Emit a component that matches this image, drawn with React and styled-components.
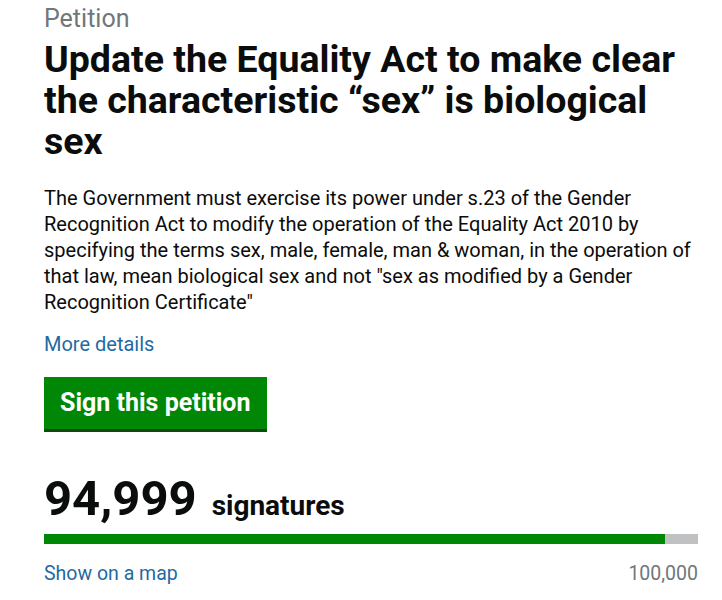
import styled, { createGlobalStyle } from "styled-components";

const GlobalStyle = createGlobalStyle`
  body {
    margin: 0;
    background: #ffffff;
    font-family: Roboto, "Noto Sans", Arial, sans-serif;
    color: #0b0c0c;
  }
`;

const petition = {
  title: "Update the Equality Act to make clear the characteristic \u201csex\u201d is biological sex",
  summary:
    'The Government must exercise its power under s.23 of the Gender Recognition Act to modify the operation of the Equality Act 2010 by specifying the terms sex, male, female, man & woman, in the operation of that law, mean biological sex and not "sex as modified by a Gender Recognition Certificate"',
  signatures: 94999,
  threshold: 100000,
};

const App = () => {
  const percent = Math.min(100, (petition.signatures / petition.threshold) * 100);
  return (
    <>
      <GlobalStyle />
      <Page>
        <Caption>Petition</Caption>
        <Title>{petition.title}</Title>
        <Summary>{petition.summary}</Summary>
        <Link href="#">More details</Link>
        <SignButton type="button">Sign this petition</SignButton>
        <Count>
          <Number>{petition.signatures.toLocaleString("en-GB")}</Number>
          <Unit>signatures</Unit>
        </Count>
        <Bar>
          <Fill style={{ width: `${percent}%` }} />
        </Bar>
        <Footer>
          <FooterLink href="#">Show on a map</FooterLink>
          <Target>{petition.threshold.toLocaleString("en-GB")}</Target>
        </Footer>
      </Page>
    </>
  );
};

export default App;

const Page = styled.main`
  display: flex;
  flex-direction: column;
  align-items: flex-start;
  padding: 4px 24px 0 44px;
`;

const Caption = styled.span`
  font-size: 25px;
  line-height: 30px;
  color: #6f777b;
`;

const Title = styled.h1`
  font-size: 37.5px;
  line-height: 41px;
  font-weight: 700;
  margin: 5px 0 0 0;
`;

const Summary = styled.p`
  font-size: 20px;
  line-height: 26px;
  margin: 23px 0 0 0;
`;

const Link = styled.a`
  font-size: 20px;
  line-height: 26px;
  color: #1f6aa3;
  text-decoration: none;
  margin-top: 16px;
`;

const SignButton = styled.button`
  font-family: inherit;
  font-size: 25px;
  line-height: 28px;
  font-weight: 700;
  color: #ffffff;
  background: #008705;
  border: none;
  border-radius: 0;
  padding: 12px 16px;
  margin-top: 20px;
  box-shadow: 0 3px 0 #0b4a12;
  cursor: pointer;
`;

const Count = styled.div`
  display: flex;
  align-items: baseline;
  gap: 15px;
  margin-top: 44px;
`;

const Number = styled.span`
  font-size: 49px;
  line-height: 52px;
  font-weight: 700;
`;

const Unit = styled.span`
  font-size: 28px;
  font-weight: 700;
`;

const Bar = styled.div`
  align-self: stretch;
  height: 10px;
  background: #bfc1c3;
  margin-top: 9px;
`;

const Fill = styled.div`
  height: 100%;
  background: #008705;
`;

const Footer = styled.div`
  align-self: stretch;
  display: flex;
  justify-content: space-between;
  font-size: 19.5px;
  line-height: 26px;
  margin-top: 17px;
`;

const FooterLink = styled(Link)`
  font-size: 19.5px;
  margin-top: 0;
`;

const Target = styled.span`
  color: #6f777b;
`;
